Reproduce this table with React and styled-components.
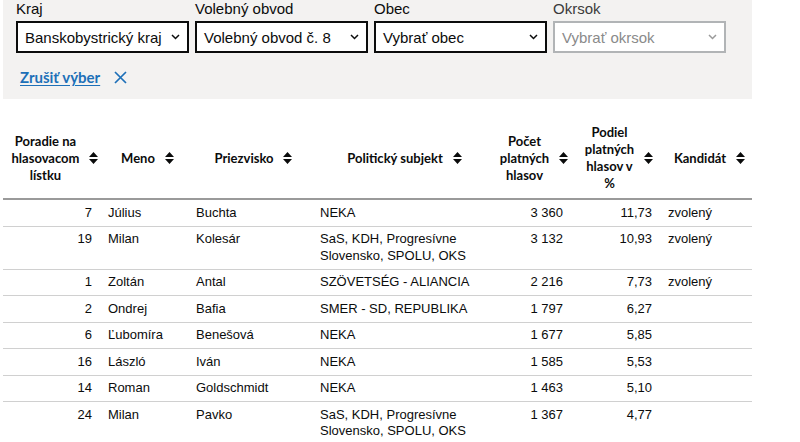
import React from 'react';
import styled, { createGlobalStyle } from 'styled-components';

const GlobalStyle = createGlobalStyle`
  body {
    margin: 0;
    background: #ffffff;
    color: #0b0c0c;
    font-family: "Liberation Sans", Arial, sans-serif;
  }
`;

const StyledPage = styled.div`
  width: 749px;
  margin-left: 3px;
`;

const StyledFilterPanel = styled.div`
  background: #f3f2f1;
  padding: 0 13px 12px 13px;
`;

const StyledFilterRow = styled.div`
  display: flex;
  gap: 6px;
`;

const StyledField = styled.div`
  display: flex;
  flex-direction: column;
  width: 173px;
`;

const StyledLabel = styled.label`
  font-size: 15px;
  line-height: 18px;
  margin-bottom: 3px;
  color: ${({ disabled }) => (disabled ? '#3b3b3b' : '#0b0c0c')};
`;

const StyledSelect = styled.div`
  box-sizing: border-box;
  height: 32px;
  display: flex;
  align-items: center;
  justify-content: space-between;
  padding: 0 7px 0 7px;
  background: #ffffff;
  border: 2px solid ${({ disabled }) => (disabled ? '#b1b4b6' : '#0b0c0c')};
  font-size: 15px;
  color: ${({ disabled }) => (disabled ? '#8a8a8a' : '#0b0c0c')};
  white-space: nowrap;
`;

const StyledClearRow = styled.div`
  display: flex;
  align-items: center;
  gap: 14px;
  margin-top: 14px;
  padding-left: 4px;
  height: 20px;
`;

const StyledClearLink = styled.a`
  font-family: Lato, "Noto Sans", sans-serif;
  font-weight: 700;
  font-size: 15px;
  color: #1d70b8;
  text-decoration: underline;
  text-underline-offset: 2px;
`;

const StyledTable = styled.table`
  width: 749px;
  margin-top: 18px;
  border-collapse: collapse;
  table-layout: fixed;
`;

const StyledTh = styled.th`
  font-family: Lato, "Noto Sans", sans-serif;
  font-weight: 700;
  font-size: 13px;
  line-height: 17px;
  padding: 7px 4px 6px 11px;
  border-bottom: 2px solid #9a9a9a;
  vertical-align: middle;
`;

const StyledThInner = styled.div`
  display: flex;
  align-items: center;
  justify-content: center;
  gap: 10px;
`;

const StyledThText = styled.span`
  white-space: pre-line;
  text-align: center;
`;

const StyledTd = styled.td`
  font-size: 13px;
  line-height: 16.5px;
  padding: 4.5px 8px;
  border-bottom: 1px solid #d0d0d0;
  vertical-align: top;
  text-align: ${({ $align }) => $align || 'left'};
`;

const Chevron = ({ color }) => (
  <svg width="9" height="6" viewBox="0 0 9 6">
    <path d="M1 1 L4.5 4.5 L8 1" fill="none" stroke={color} strokeWidth="1.5" />
  </svg>
);

const SortIcon = () => (
  <svg width="9" height="12" viewBox="0 0 9 12" style={{ flex: '0 0 auto' }}>
    <path d="M4.5 0 L9 5 L0 5 Z M0 7 L9 7 L4.5 12 Z" fill="#0b0c0c" />
  </svg>
);

const CloseIcon = () => (
  <svg width="13" height="13" viewBox="0 0 13 13">
    <path d="M1 1 L12 12 M12 1 L1 12" stroke="#1d70b8" strokeWidth="1.7" fill="none" />
  </svg>
);

const filters = [
  { label: 'Kraj', value: 'Banskobystrický kraj' },
  { label: 'Volebný obvod', value: 'Volebný obvod č. 8' },
  { label: 'Obec', value: 'Vybrať obec' },
  { label: 'Okrsok', value: 'Vybrať okrsok', disabled: true },
];

const columns = [
  { title: 'Poradie na\nhlasovacom\nlístku', width: 97, align: 'right' },
  { title: 'Meno', width: 88 },
  { title: 'Priezvisko', width: 124 },
  { title: 'Politický subjekt', width: 178 },
  { title: 'Počet\nplatných\nhlasov', width: 81, align: 'right' },
  { title: 'Podiel\nplatných\nhlasov v\n%', width: 89, align: 'right' },
  { title: 'Kandidát', width: 92 },
];

const rows = [
  ['7', 'Július', 'Buchta', 'NEKA', '3 360', '11,73', 'zvolený'],
  ['19', 'Milan', 'Kolesár', 'SaS, KDH, Progresívne Slovensko, SPOLU, OKS', '3 132', '10,93', 'zvolený'],
  ['1', 'Zoltán', 'Antal', 'SZÖVETSÉG - ALIANCIA', '2 216', '7,73', 'zvolený'],
  ['2', 'Ondrej', 'Bafia', 'SMER - SD, REPUBLIKA', '1 797', '6,27', ''],
  ['6', 'Ľubomíra', 'Benešová', 'NEKA', '1 677', '5,85', ''],
  ['16', 'László', 'Iván', 'NEKA', '1 585', '5,53', ''],
  ['14', 'Roman', 'Goldschmidt', 'NEKA', '1 463', '5,10', ''],
  ['24', 'Milan', 'Pavko', 'SaS, KDH, Progresívne Slovensko, SPOLU, OKS', '1 367', '4,77', ''],
];

export default function App() {
  return (
    <StyledPage>
      <GlobalStyle />
      <StyledFilterPanel>
        <StyledFilterRow>
          {filters.map((f) => (
            <StyledField key={f.label}>
              <StyledLabel disabled={f.disabled}>{f.label}</StyledLabel>
              <StyledSelect disabled={f.disabled}>
                <span>{f.value}</span>
                <Chevron color={f.disabled ? '#9a9a9a' : '#0b0c0c'} />
              </StyledSelect>
            </StyledField>
          ))}
        </StyledFilterRow>
        <StyledClearRow>
          <StyledClearLink href="#">Zrušiť výber</StyledClearLink>
          <CloseIcon />
        </StyledClearRow>
      </StyledFilterPanel>

      <StyledTable>
        <colgroup>
          {columns.map((c) => (
            <col key={c.title} style={{ width: c.width }} />
          ))}
        </colgroup>
        <thead>
          <tr>
            {columns.map((c) => (
              <StyledTh key={c.title}>
                <StyledThInner>
                  <StyledThText>{c.title}</StyledThText>
                  <SortIcon />
                </StyledThInner>
              </StyledTh>
            ))}
          </tr>
        </thead>
        <tbody>
          {rows.map((r, i) => (
            <tr key={i}>
              {r.map((cell, j) => (
                <StyledTd key={j} $align={columns[j].align}>
                  {cell}
                </StyledTd>
              ))}
            </tr>
          ))}
        </tbody>
      </StyledTable>
    </StyledPage>
  );
}
